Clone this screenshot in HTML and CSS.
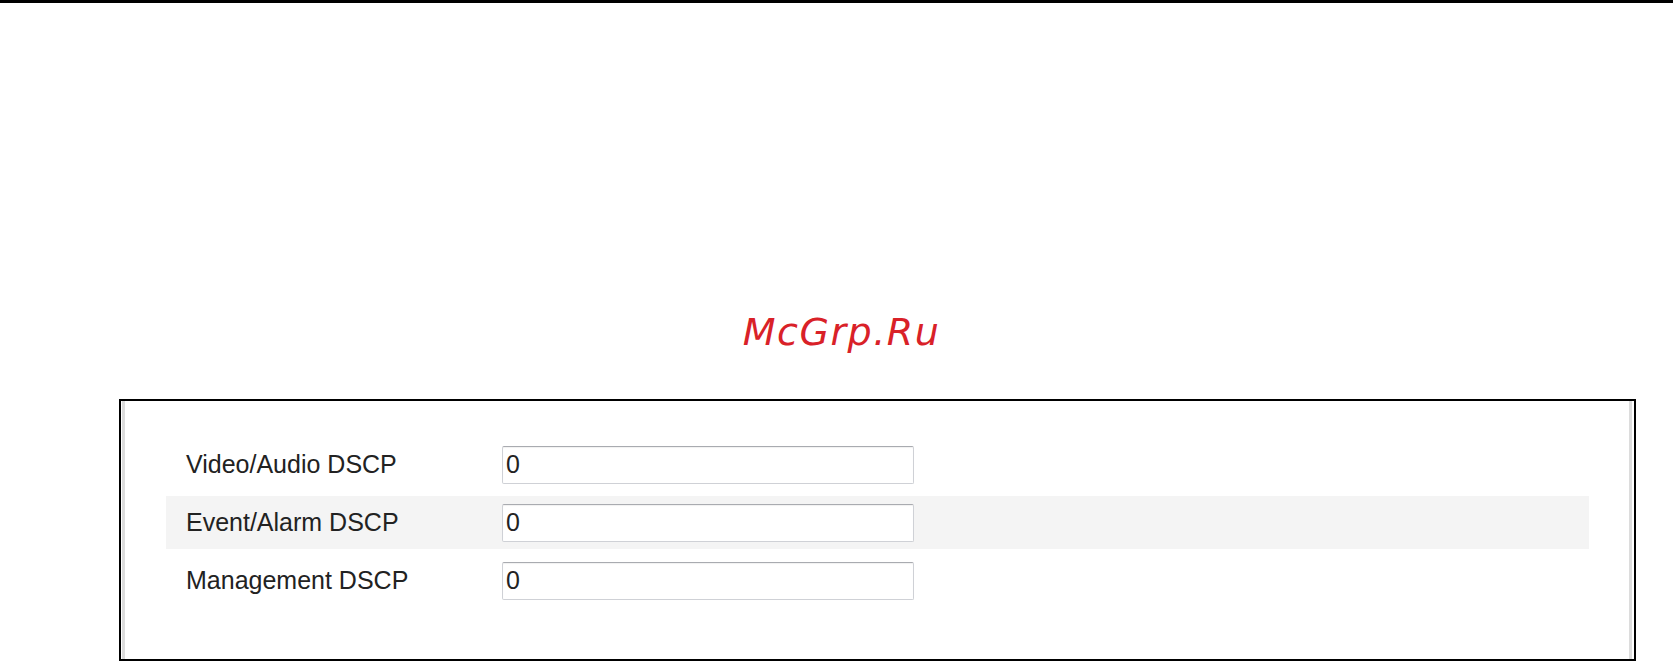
FILE: index.html
```html
<!DOCTYPE html>
<html>
  <head>
    <title>DSCP</title>
    <meta charset="utf-8">
    <link rel="stylesheet" href="styles.css">
  </head>
  <body>
    <div class="top-rule"></div>
    <div class="watermark">McGrp.Ru</div>
    <div class="panel">
      <div class="panel-body">
        <form class="dscp-form">
          <label class="row">
            <span class="row-label">Video/Audio DSCP</span>
            <input type="text" class="row-input" value="0">
          </label>
          <label class="row row-alt">
            <span class="row-label">Event/Alarm DSCP</span>
            <input type="text" class="row-input" value="0">
          </label>
          <label class="row">
            <span class="row-label">Management DSCP</span>
            <input type="text" class="row-input" value="0">
          </label>
        </form>
      </div>
    </div>
  </body>
</html>
```

FILE: styles.css
```css
body {
  margin: 0;
  background: #fff;
  font-family: "Liberation Sans", Arial, sans-serif;
}
.top-rule {
  height: 3px;
  background: #000;
}
.watermark {
  margin-top: 306px;
  height: 46px;
  line-height: 46px;
  padding-left: 10px;
  text-align: center;
  font-family: "DejaVu Sans", sans-serif;
  font-style: oblique;
  font-size: 38px;
  letter-spacing: 1.5px;
  color: #d92128;
}
.panel {
  box-sizing: border-box;
  margin: 44px 0 0 119px;
  width: 1517px;
  height: 262px;
  border: 2px solid #000;
  padding: 0 2px 0 1px;
}
.panel-body {
  box-sizing: border-box;
  height: 100%;
  border-left: 3px solid #dcdcdc;
  border-right: 3px solid #dcdcdc;
  padding: 37px 40px 0 41px;
}
.dscp-form {
  display: flex;
  flex-direction: column;
  gap: 5px;
  margin: 0;
}
.row {
  display: flex;
  align-items: center;
  height: 53px;
  padding-left: 20px;
  font-size: 25px;
  color: #222;
}
.row-alt {
  background: #f4f4f4;
}
.row-label {
  width: 316px;
}
.row-input {
  box-sizing: border-box;
  width: 412px;
  height: 38px;
  margin: 0;
  padding: 0 3px;
  border: 1px solid #cfd1d6;
  border-top-color: #a9abb0;
  border-radius: 2px;
  box-shadow: inset 0 1px 1px rgba(0, 0, 0, 0.06);
  font-family: "Liberation Sans", Arial, sans-serif;
  font-size: 25px;
  color: #222;
  background: #fff;
}
```
